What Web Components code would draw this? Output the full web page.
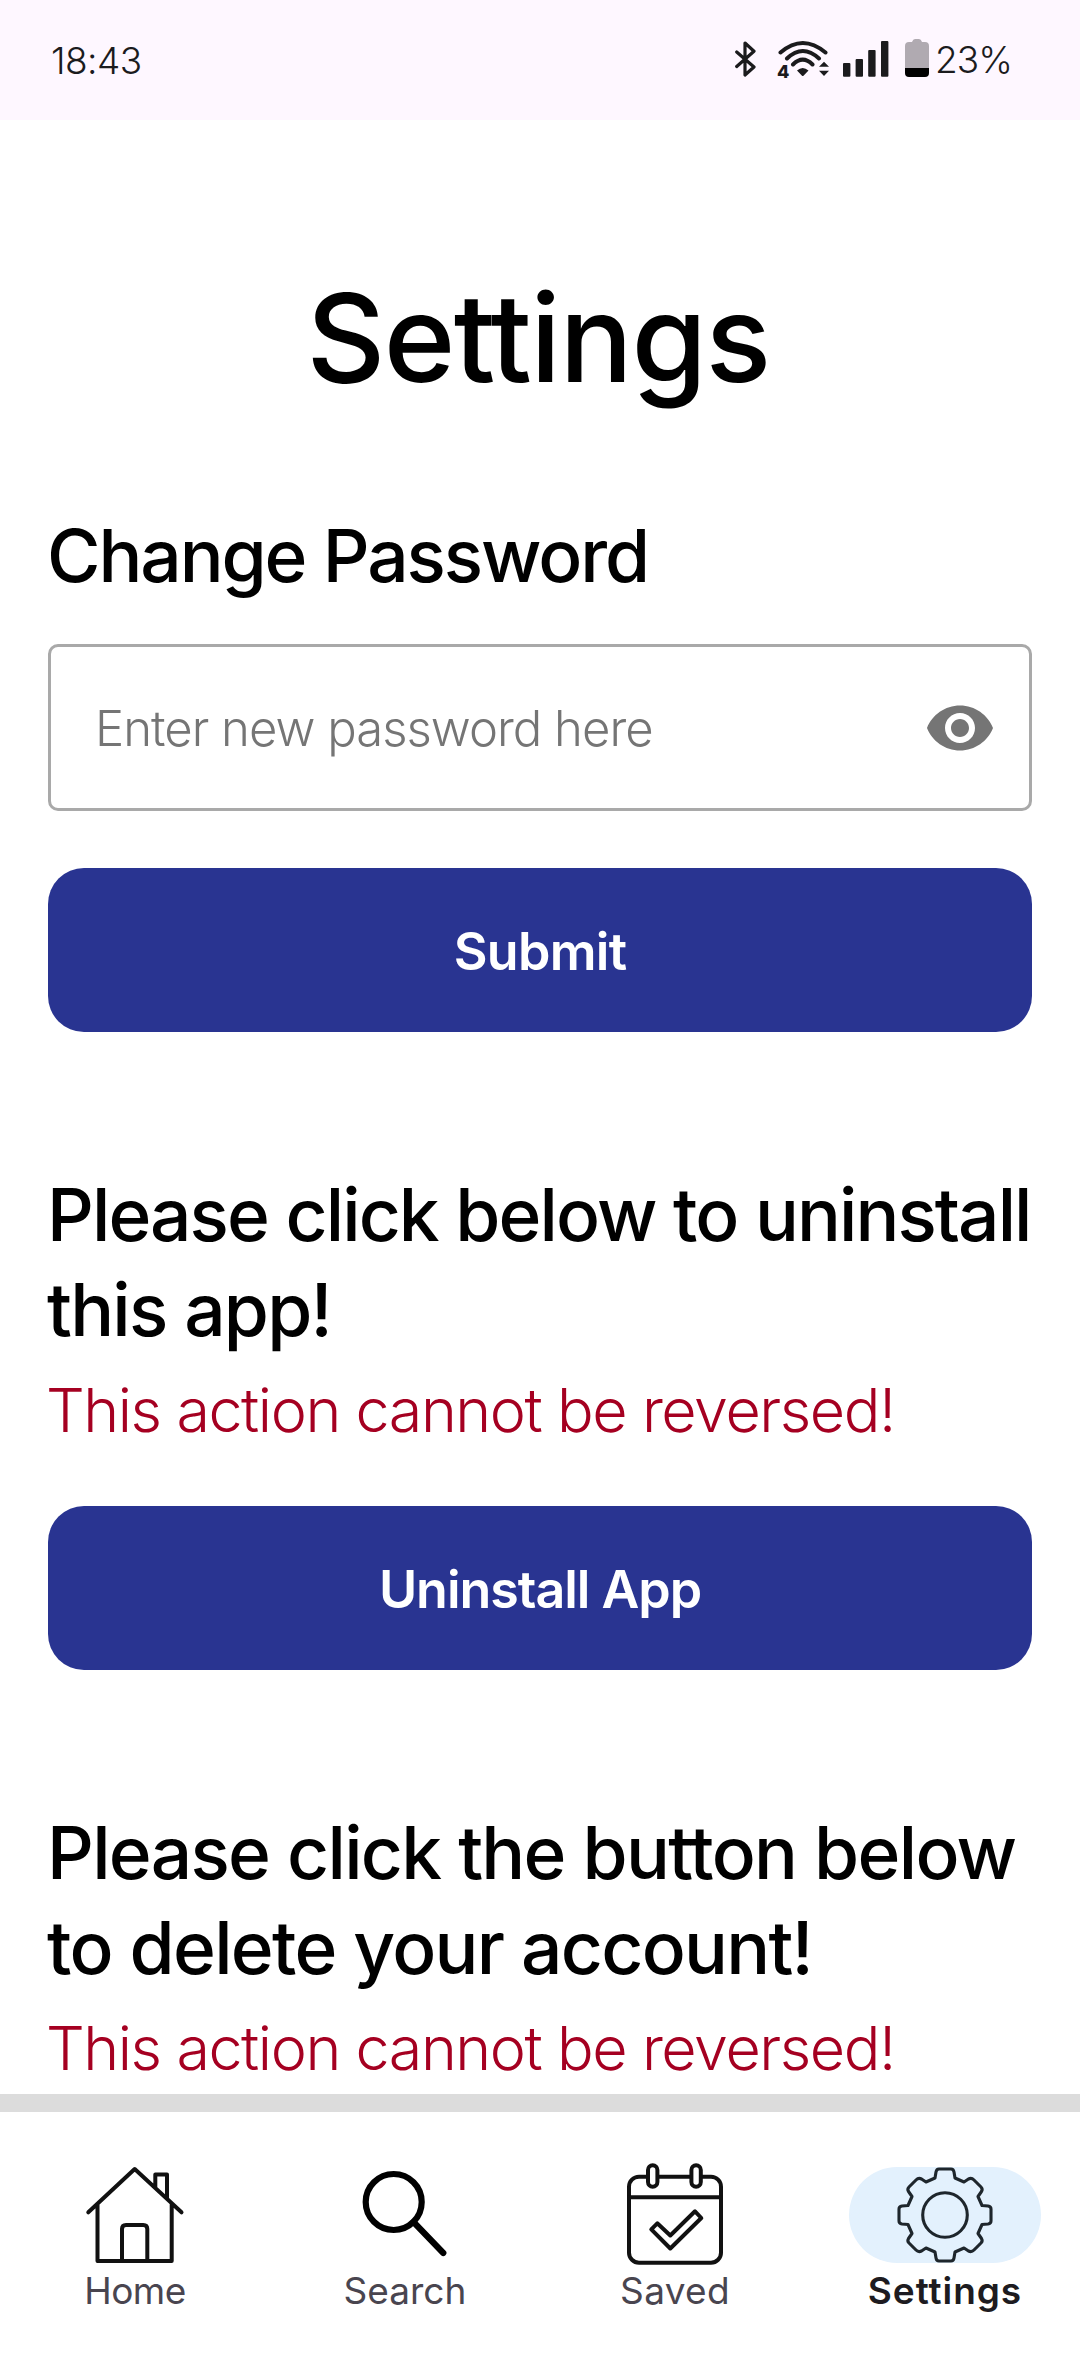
<!DOCTYPE html>
<html lang="en">
<head>
<meta charset="utf-8">
<title>Settings</title>
<style>
html, body { margin: 0; height: 100%; overflow: hidden; background: #fff; }
body { font-family: Inter, "Liberation Sans", sans-serif; }
</style>
</head>
<body>
<settings-app></settings-app>
<script>
const define = (name, html) => customElements.define(name, class extends HTMLElement {
  constructor() {
    super();
    const t = document.createElement('template');
    t.innerHTML = html;
    this.attachShadow({ mode: 'open' }).append(t.content.cloneNode(true));
  }
});

define('status-bar', `
<style>
:host { display: flex; align-items: center; justify-content: space-between; height: 120px; flex: none;
  padding: 0 68px 0 51px; background: #fef7ff; color: #1b1b1d; font-size: 37px; line-height: 45px; font-weight: 300; }
.time { letter-spacing: -0.55px; }
.icons { display: flex; align-items: center; height: 45px; }
.pct { width: 77px; letter-spacing: -1px; margin-left: 6px; position: relative; top: -1px; }
svg { display: block; height: 42px; }
</style>
<span class="time">18:43</span>
<div class="icons">
  <svg width="21" viewBox="735 39 21 42" style="margin-right:21px" fill="none" stroke="#1b1b1d" stroke-width="3.2" stroke-linecap="round" stroke-linejoin="round"><path d="M736.7 52 754 67 745 75V43L754 51.2 736.7 66.5"/></svg>
  <svg width="53" viewBox="777 39 53 42" style="margin-right:13px"><g fill="none" stroke="#1b1b1d" stroke-width="4" stroke-linecap="round"><path d="M780.5 52.5Q802.7 33.5 825.5 52.5M787 58.5Q802.7 43.5 819 58.5M793 64.5Q802.7 54.8 812.5 64.5"/></g><path fill="#1b1b1d" d="M797 70.5Q802.7 65.5 808.5 70.5L803.5 75.7Q802.7 76.4 802 75.7ZM824 61.7 829 66.7H819ZM819 70.7H829L824 76Z"/><text x="777" y="78" font-size="18" font-weight="800" fill="#1b1b1d">4</text></svg>
  <svg width="46" viewBox="843 39 46 42" style="margin-right:16px" fill="#1b1b1d"><rect x="843" y="63" width="7.4" height="13.8" rx="1"/><rect x="855.6" y="59" width="7.4" height="17.8" rx="1"/><rect x="868.2" y="50" width="7.4" height="26.8" rx="1"/><rect x="881" y="41" width="7.4" height="35.8" rx="1"/></svg>
  <svg width="24" viewBox="905 39 24 42"><path fill="#b0aab1" d="M909 42H912Q913 39 915 39H919Q921 39 922 42H925Q929 42 929 46V68H905V46Q905 42 909 42Z"/><path d="M905 68H929V73Q929 77 925 77H909Q905 77 905 73Z"/></svg>
  <span class="pct">23%</span>
</div>`);

define('page-title', `
<style>
:host { display: block; text-align: center; font-size: 122px; line-height: 147px; font-weight: 500; letter-spacing: -1.54px; color: #000; padding-right: 4px; }
</style><slot></slot>`);

define('section-heading', `
<style>
:host { display: block; margin-left: -1px; white-space: nowrap; font-size: 73px; line-height: 95px; font-weight: 500; color: #000; }
::slotted(span) { display: block; }
</style><slot></slot>`);

define('warning-text', `
<style>
:host { display: block; margin: 16px 0 0 -2px; white-space: nowrap; font-size: 61px; line-height: 74px; font-weight: 300; letter-spacing: -1.44px; color: #a50021; }
</style><slot></slot>`);

define('password-field', `
<style>
:host { display: flex; align-items: center; justify-content: space-between; box-sizing: border-box; height: 167px;
  border: 3px solid #a9a9a9; border-radius: 10px; padding: 0 33px 0 44px; color: #757575;
  font-size: 49px; line-height: 59px; font-weight: 300; letter-spacing: -0.98px; }
.hint { padding-top: 2px; }
svg { display: block; width: 72px; height: 72px; }
</style>
<span class="hint"><slot></slot></span>
<svg viewBox="0 0 24 24" fill="#757575"><path d="M12 4.5C7 4.5 2.73 7.61 1 12c1.73 4.39 6 7.5 11 7.5s9.27-3.11 11-7.5c-1.73-4.39-6-7.5-11-7.5zM12 17c-2.76 0-5-2.24-5-5s2.24-5 5-5 5 2.24 5 5-2.24 5-5 5zm0-8c-1.66 0-3 1.34-3 3s1.34 3 3 3 3-1.34 3-3-1.34-3-3-3z"/></svg>`);

define('primary-button', `
<style>
:host { display: flex; align-items: center; justify-content: center; box-sizing: border-box; height: 164px; border-radius: 36px;
  background: #293491; color: #fff; font-size: 52px; line-height: 63px; font-weight: 600; letter-spacing: -0.7px; padding-top: 3px; }
</style><slot></slot>`);

define('nav-item', `
<style>
:host { display: flex; flex: 1; flex-direction: column; align-items: center; gap: 5px; color: #49454f; font-size: 37px; line-height: 45px; font-weight: 400; }
.pill { display: flex; justify-content: center; width: 192px; height: 96px; border-radius: 48px; }
:host([active]) { color: #1d1b20; font-weight: 600; }
:host([active]) .pill { background: #e3f1fd; }
</style>
<div class="pill"><slot name="icon"></slot></div><div><slot></slot></div>`);

define('nav-bar', `
<style>
:host { display: flex; flex: none; box-sizing: border-box; height: 282px; border-top: 18px solid #dcdcdc; padding-top: 55px; background: #fff; }
::slotted(nav-item) { min-width: 0; }
</style><slot></slot>`);

define('settings-app', `
<style>
:host { display: flex; flex-direction: column; height: 2376px; width: 1080px; overflow: hidden; }
main { flex: 1; min-height: 0; overflow: hidden; box-sizing: border-box; padding: 144px 48px 0; }
.first { margin-top: 97px; }
password-field { margin-top: 41px; }
.submit { margin-top: 57px; }
.next { margin-top: 135px; }
.action { margin-top: 59px; letter-spacing: -1.03px; }
nav-item svg { display: block; width: 96px; height: 96px; overflow: visible; fill: none; stroke: #111; stroke-width: 4; stroke-linecap: round; stroke-linejoin: round; }
</style>
<status-bar></status-bar>
<main>
  <page-title>Settings</page-title>
  <section-heading class="first"><span style="letter-spacing:-2.09px">Change Password</span></section-heading>
  <password-field>Enter new password here</password-field>
  <primary-button class="submit">Submit</primary-button>
  <section-heading class="next"><span style="letter-spacing:-1.92px">Please click below to uninstall</span><span style="letter-spacing:-1.77px">this app!</span></section-heading>
  <warning-text>This action cannot be reversed!</warning-text>
  <primary-button class="action">Uninstall App</primary-button>
  <section-heading class="next"><span style="letter-spacing:-1.7px">Please click the button below</span><span style="letter-spacing:-1.71px">to delete your account!</span></section-heading>
  <warning-text>This action cannot be reversed!</warning-text>
</main>
<nav-bar>
  <nav-item style="letter-spacing:-.5px"><svg slot="icon" viewBox="0 0 96 96"><path d="M1.3 45.3 47.7 2 94.5 45.3M10.5 37.5V94H84.7V37.5M35 94V62Q35 58 39 58H56.3Q60.3 58 60.3 62V94M68.3 20.5V7.5H80V31.5"/></svg>Home</nav-item>
  <nav-item><svg slot="icon" viewBox="0 0 96 96" style="stroke:#000;stroke-width:6.2"><circle cx="36.7" cy="35" r="28"/><path d="M56.5 55 86.3 86"/></svg>Search</nav-item>
  <nav-item style="letter-spacing:.3px"><svg slot="icon" viewBox="0 0 96 96"><rect x="2" y="9.7" width="92" height="86" rx="10"/><path d="M2 30.3H94M24.3 62.3 30.3 56.3 43.3 68.5 68 44.3 74.3 51 43.3 81.5Z"/><g fill="#fff"><rect x="21" y="-1.7" width="9.4" height="21.5" rx="4.7"/><rect x="64.4" y="-1.7" width="9.4" height="21.5" rx="4.7"/></g></svg>Saved</nav-item>
  <nav-item active style="letter-spacing:.95px"><svg slot="icon" viewBox="-48 -48 96 96" style="stroke:#1e262c;stroke-width:3.1"><circle r="22.3"/><path d="M-10-37-9-43Q-8.5-46-6-46H6Q8.5-46 9-43L10-37 19-33 23.5-36Q26.5-37.5 29-35L36-28Q38-26 36.5-23.5L33-18.5 37-9.5 43-9Q46-8.5 46-6V6Q46 8.500 43 9L37 9.500 33 18.500 36.500 23.500Q38 26 36 28L29 35Q26.500 37.500 23.500 36L19 33 10 37 9 43Q8.500 46 6 46H-6Q-8.500 46-9 43L-10 37-19 33-23.500 36Q-26.500 37.500-29 35L-36 28Q-38 26-36.500 23.500L-33 18.500-37 9.500-43 9Q-46 8.500-46 6V-6Q-46-8.500-43-9L-37-9.500-33-18.500-36.500-23.500Q-38-26-36-28L-29-35Q-26.500-37.500-23.500-36L-19-33Z"/></svg>Settings</nav-item>
</nav-bar>`);
</script>
</body>
</html>
